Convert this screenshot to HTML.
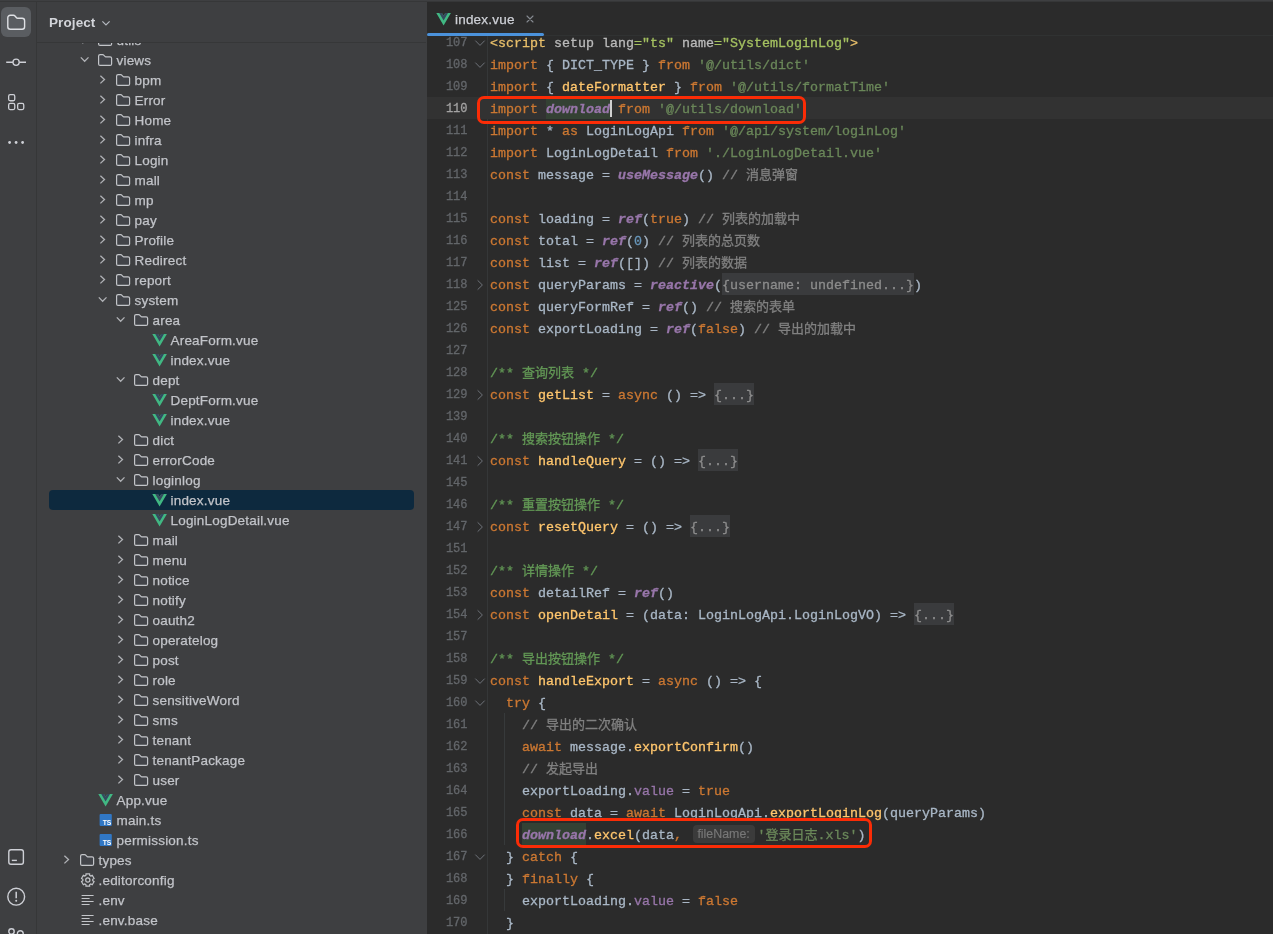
<!DOCTYPE html>
<html lang="zh">
<head>
<meta charset="utf-8">
<title>index.vue</title>
<style>
html,body{margin:0;padding:0}
body{width:1273px;height:934px;overflow:hidden;background:#3e3f41;position:relative;font-family:"Liberation Sans","Noto Sans CJK SC",sans-serif;color:#ced0d6}
#topline{position:absolute;left:0;top:0;width:1273px;height:1px;background:#3e3f41;border-bottom:1px solid #363738;z-index:9}
#strip{position:absolute;left:0;top:0;width:36px;height:934px;background:#3e3f41;border-right:1px solid #363738}
#strip .btn{position:absolute;left:1.400px;top:7px;width:29.600px;height:30px;border-radius:6px;background:#5a5d61}
#strip svg{position:absolute;left:6px;width:20px;height:20px}
#proj{position:absolute;left:37px;top:0;width:389px;height:934px;background:#3e3f41;overflow:hidden}
#proj .hd{position:absolute;left:0;top:0;width:389px;height:42px;background:#3e3f41;border-bottom:1px solid #363738;z-index:3}
#proj .hd b{will-change:transform;position:absolute;left:12px;top:14px;font-size:13.5px;line-height:18px;color:#d3d5da;letter-spacing:.1px}
#proj .hd svg{position:absolute;left:63px;top:17px;width:12px;height:12px}
#tree{will-change:transform;position:absolute;left:-37px;top:0;width:464px;height:934px}
.row{position:absolute;left:0;width:464px;height:20px}
.row span{position:absolute;top:0;height:20px}
.row .t{font-size:13.5px;line-height:21.5px;color:#c2c4c9;white-space:nowrap;-webkit-text-stroke:.25px;letter-spacing:.2px;margin-left:.5px}
.row .a svg{position:absolute;left:0;top:2px;width:16px;height:16px}.row .i svg{position:absolute;left:2px;top:2px;width:16px;height:16px}
.sel{position:absolute;left:49px;width:365px;height:20px;border-radius:4px;background:#0d293e}
#ed{position:absolute;left:427px;top:0;width:846px;height:934px;background:#2b2b2b;overflow:hidden}
#tabs{position:absolute;left:0;top:0;width:846px;height:35px;background:#2b2b2b;border-bottom:1px solid #303232;z-index:5}
#tabs .ti{position:absolute;left:8.700px;top:11.100px;width:16px;height:16px}
#tabs .tt{will-change:transform;position:absolute;left:28px;top:11px;font-size:13.5px;line-height:18.5px;color:#ced0d6;-webkit-text-stroke:.25px;letter-spacing:.2px}
#tabs .tx{position:absolute;left:97px;top:13px;width:12px;height:12px}
#tabs .ul{position:absolute;left:0;top:33px;width:117px;height:3.3px;border-radius:1.6px;background:#4b92db}
#code{will-change:transform;position:absolute;left:0;top:36px;width:846px;height:898px;overflow:hidden;font-family:"Liberation Mono","Noto Sans CJK SC",monospace;font-size:13.333px;color:#a9b7c6;-webkit-text-stroke:.3px}
#gsep{position:absolute;left:60px;top:0;width:1px;height:898px;background:#353738}
.ln{position:absolute;left:0;width:846px;height:22px;line-height:25px;white-space:pre}
.ln.cur{background:#323232}
.ln .no{position:absolute;left:0;top:0;width:40.5px;text-align:right;color:#63666a;font-size:12px}
.ln.cur .no{color:#a4a3a3}
.ln .fa{position:absolute;left:47.3px;top:5.5px;width:12px;height:12px}
.ln .cd{position:absolute;left:63px;top:0;height:22px}
.k{color:#cc7832}.s{color:#6a8759}.c{color:#808080}.d{color:#629755}.f{color:#ffc66d}
.p{color:#9876aa;font-style:italic;font-weight:bold}.pn{color:#9876aa}.n{color:#6897bb}
.tg{color:#e8bf6a}.at{color:#bababa}.av{color:#a5c261}.w{color:#a9b7c6}
.z{font-size:13px}
.fo{background:#3a3b3d;color:#8c8c8c;display:inline-block;height:22px;vertical-align:top}
.hl{background:#344134;display:inline-block;height:22px;vertical-align:top}
.caret{display:inline-block;width:2px;height:17px;background:#d0d0d0;vertical-align:-4px;margin-right:-2px}
.hint{display:inline-block;vertical-align:top;font-family:"Liberation Sans",sans-serif;font-size:12.400px;line-height:18.700px;height:17.700px;width:62px;box-sizing:border-box;text-align:center;background:#3b3b3b;color:#787878;border-radius:4px;margin:2px 3px 0 2.600px;-webkit-text-stroke:.15px}
.guide{position:absolute;left:77px;width:1px;background:#373a3b}
.red{position:absolute;border:3.600px solid #fb2c06;border-radius:7px;box-sizing:border-box;z-index:8}
</style>
</head>
<body>
<div id="topline"></div>
<div id="strip">
<div class="btn"></div>
<svg style="top:12px" viewBox="0 0 20 20"><path d="M1.800 5.800a2.500 2.500 0 0 1 2.500-2.500h3.200c.6 0 1.100.25 1.500.7l1.500 1.800c.3.350.7.500 1.100.500h4.500a2.500 2.500 0 0 1 2.500 2.500v6a2.500 2.500 0 0 1-2.500 2.500H4.300a2.500 2.500 0 0 1-2.500-2.500z" fill="none" stroke="#dfe1e5" stroke-width="1.400"/></svg>
<svg style="top:52px" viewBox="0 0 20 20"><circle cx="10.100" cy="10.250" r="3.100" fill="none" stroke="#ced0d6" stroke-width="1.300"/><path d="M.2 10.250h6.800M13.200 10.250h6.900" stroke="#ced0d6" stroke-width="1.300" fill="none"/></svg>
<svg style="top:92px" viewBox="0 0 20 20"><rect x="2.650" y="2.650" width="6.100" height="6.100" rx="1.500" fill="none" stroke="#ced0d6" stroke-width="1.300"/><rect x="2.650" y="11.450" width="6.100" height="6.100" rx="1.500" fill="none" stroke="#ced0d6" stroke-width="1.300"/><rect x="11.650" y="11.450" width="6.100" height="6.100" rx="1.500" fill="none" stroke="#ced0d6" stroke-width="1.300"/></svg>
<svg style="top:132px" viewBox="0 0 20 20"><circle cx="3.600" cy="10.500" r="1.400" fill="#ced0d6"/><circle cx="10.100" cy="10.500" r="1.400" fill="#ced0d6"/><circle cx="16.600" cy="10.500" r="1.400" fill="#ced0d6"/></svg>
<svg style="top:847px" viewBox="0 0 20 20"><rect x="2.800" y="2.700" width="14.600" height="14.600" rx="2.200" fill="none" stroke="#ced0d6" stroke-width="1.400"/><path d="M5.800 13.400h5.100" stroke="#ced0d6" stroke-width="1.400"/></svg>
<svg style="top:887px" viewBox="0 0 20 20" overflow="visible"><circle cx="10.200" cy="9.700" r="8.400" fill="none" stroke="#ced0d6" stroke-width="1.400"/><path d="M10.200 4.750v6.450" stroke="#ced0d6" stroke-width="1.500"/><circle cx="10.200" cy="13.800" r="1" fill="#ced0d6"/></svg>
<svg style="top:925px" viewBox="0 0 20 20"><circle cx="5.500" cy="6.500" r="2.700" fill="none" stroke="#ced0d6" stroke-width="1.400"/><circle cx="14.300" cy="8.600" r="2.900" fill="none" stroke="#ced0d6" stroke-width="1.400"/></svg>
</div>
<div id="proj">
<div id="tree">
<div class="row" style="top:30px"><span style="left:76px" class="a"><svg class="ar" viewBox="0 0 16 16"><path d="M6.400 3.700 10.500 7.550 6.400 11.400" fill="none" stroke="#b0b2b6" stroke-width="1.300"/></svg></span><span style="left:94.7px" class="i"><svg class="ic" viewBox="0 0 16 16"><path d="M1.600 4.100c0-.83.670-1.500 1.500-1.500h2.500c.4 0 .78.160 1.060.44l1.300 1.420c.19.200.45.320.73.320h4.410c.83 0 1.500.670 1.500 1.500v5.620c0 .83-.67 1.500-1.500 1.500H3.100c-.83 0-1.500-.67-1.500-1.500z" fill="#424449" stroke="#c3c5c9" stroke-width="1.200"/></svg></span><span class="t" style="left:116px">utils</span></div>
<div class="row" style="top:50px"><span style="left:76px" class="a"><svg class="ar" viewBox="0 0 16 16"><path d="M4.800 5.400 8.650 9.250 12.500 5.400" fill="none" stroke="#b0b2b6" stroke-width="1.300"/></svg></span><span style="left:94.7px" class="i"><svg class="ic" viewBox="0 0 16 16"><path d="M1.600 4.100c0-.83.670-1.500 1.500-1.500h2.500c.4 0 .78.160 1.060.44l1.300 1.420c.19.200.45.320.73.320h4.410c.83 0 1.500.670 1.500 1.500v5.620c0 .83-.67 1.500-1.500 1.500H3.100c-.83 0-1.500-.67-1.500-1.500z" fill="#424449" stroke="#c3c5c9" stroke-width="1.200"/></svg></span><span class="t" style="left:116px">views</span></div>
<div class="row" style="top:70px"><span style="left:94px" class="a"><svg class="ar" viewBox="0 0 16 16"><path d="M6.400 3.700 10.500 7.550 6.400 11.400" fill="none" stroke="#b0b2b6" stroke-width="1.300"/></svg></span><span style="left:112.7px" class="i"><svg class="ic" viewBox="0 0 16 16"><path d="M1.600 4.100c0-.83.670-1.500 1.500-1.500h2.500c.4 0 .78.160 1.060.44l1.300 1.420c.19.200.45.320.73.320h4.410c.83 0 1.500.670 1.500 1.500v5.620c0 .83-.67 1.500-1.500 1.500H3.100c-.83 0-1.500-.67-1.500-1.500z" fill="#424449" stroke="#c3c5c9" stroke-width="1.200"/></svg></span><span class="t" style="left:134px">bpm</span></div>
<div class="row" style="top:90px"><span style="left:94px" class="a"><svg class="ar" viewBox="0 0 16 16"><path d="M6.400 3.700 10.500 7.550 6.400 11.400" fill="none" stroke="#b0b2b6" stroke-width="1.300"/></svg></span><span style="left:112.7px" class="i"><svg class="ic" viewBox="0 0 16 16"><path d="M1.600 4.100c0-.83.670-1.500 1.500-1.500h2.500c.4 0 .78.160 1.060.44l1.300 1.420c.19.200.45.320.73.320h4.410c.83 0 1.500.670 1.500 1.500v5.620c0 .83-.67 1.500-1.500 1.500H3.100c-.83 0-1.500-.67-1.500-1.500z" fill="#424449" stroke="#c3c5c9" stroke-width="1.200"/></svg></span><span class="t" style="left:134px">Error</span></div>
<div class="row" style="top:110px"><span style="left:94px" class="a"><svg class="ar" viewBox="0 0 16 16"><path d="M6.400 3.700 10.500 7.550 6.400 11.400" fill="none" stroke="#b0b2b6" stroke-width="1.300"/></svg></span><span style="left:112.7px" class="i"><svg class="ic" viewBox="0 0 16 16"><path d="M1.600 4.100c0-.83.670-1.500 1.500-1.500h2.500c.4 0 .78.160 1.060.44l1.300 1.420c.19.200.45.320.73.320h4.410c.83 0 1.500.670 1.500 1.500v5.620c0 .83-.67 1.500-1.500 1.500H3.100c-.83 0-1.500-.67-1.500-1.500z" fill="#424449" stroke="#c3c5c9" stroke-width="1.200"/></svg></span><span class="t" style="left:134px">Home</span></div>
<div class="row" style="top:130px"><span style="left:94px" class="a"><svg class="ar" viewBox="0 0 16 16"><path d="M6.400 3.700 10.500 7.550 6.400 11.400" fill="none" stroke="#b0b2b6" stroke-width="1.300"/></svg></span><span style="left:112.7px" class="i"><svg class="ic" viewBox="0 0 16 16"><path d="M1.600 4.100c0-.83.670-1.500 1.500-1.500h2.500c.4 0 .78.160 1.060.44l1.300 1.420c.19.200.45.320.73.320h4.410c.83 0 1.500.670 1.500 1.500v5.620c0 .83-.67 1.500-1.500 1.500H3.100c-.83 0-1.500-.67-1.500-1.500z" fill="#424449" stroke="#c3c5c9" stroke-width="1.200"/></svg></span><span class="t" style="left:134px">infra</span></div>
<div class="row" style="top:150px"><span style="left:94px" class="a"><svg class="ar" viewBox="0 0 16 16"><path d="M6.400 3.700 10.500 7.550 6.400 11.400" fill="none" stroke="#b0b2b6" stroke-width="1.300"/></svg></span><span style="left:112.7px" class="i"><svg class="ic" viewBox="0 0 16 16"><path d="M1.600 4.100c0-.83.670-1.500 1.500-1.500h2.500c.4 0 .78.160 1.060.44l1.300 1.420c.19.200.45.320.73.320h4.410c.83 0 1.500.670 1.500 1.500v5.620c0 .83-.67 1.500-1.500 1.500H3.100c-.83 0-1.500-.67-1.500-1.500z" fill="#424449" stroke="#c3c5c9" stroke-width="1.200"/></svg></span><span class="t" style="left:134px">Login</span></div>
<div class="row" style="top:170px"><span style="left:94px" class="a"><svg class="ar" viewBox="0 0 16 16"><path d="M6.400 3.700 10.500 7.550 6.400 11.400" fill="none" stroke="#b0b2b6" stroke-width="1.300"/></svg></span><span style="left:112.7px" class="i"><svg class="ic" viewBox="0 0 16 16"><path d="M1.600 4.100c0-.83.670-1.500 1.500-1.500h2.500c.4 0 .78.160 1.060.44l1.300 1.420c.19.200.45.320.73.320h4.410c.83 0 1.500.670 1.500 1.500v5.620c0 .83-.67 1.500-1.500 1.500H3.100c-.83 0-1.500-.67-1.500-1.500z" fill="#424449" stroke="#c3c5c9" stroke-width="1.200"/></svg></span><span class="t" style="left:134px">mall</span></div>
<div class="row" style="top:190px"><span style="left:94px" class="a"><svg class="ar" viewBox="0 0 16 16"><path d="M6.400 3.700 10.500 7.550 6.400 11.400" fill="none" stroke="#b0b2b6" stroke-width="1.300"/></svg></span><span style="left:112.7px" class="i"><svg class="ic" viewBox="0 0 16 16"><path d="M1.600 4.100c0-.83.670-1.500 1.500-1.500h2.500c.4 0 .78.160 1.060.44l1.300 1.420c.19.200.45.320.73.320h4.410c.83 0 1.500.670 1.500 1.500v5.620c0 .83-.67 1.500-1.500 1.500H3.100c-.83 0-1.500-.67-1.500-1.500z" fill="#424449" stroke="#c3c5c9" stroke-width="1.200"/></svg></span><span class="t" style="left:134px">mp</span></div>
<div class="row" style="top:210px"><span style="left:94px" class="a"><svg class="ar" viewBox="0 0 16 16"><path d="M6.400 3.700 10.500 7.550 6.400 11.400" fill="none" stroke="#b0b2b6" stroke-width="1.300"/></svg></span><span style="left:112.7px" class="i"><svg class="ic" viewBox="0 0 16 16"><path d="M1.600 4.100c0-.83.670-1.500 1.500-1.500h2.500c.4 0 .78.160 1.060.44l1.300 1.420c.19.200.45.320.73.320h4.410c.83 0 1.500.670 1.500 1.500v5.620c0 .83-.67 1.500-1.500 1.500H3.100c-.83 0-1.500-.67-1.500-1.500z" fill="#424449" stroke="#c3c5c9" stroke-width="1.200"/></svg></span><span class="t" style="left:134px">pay</span></div>
<div class="row" style="top:230px"><span style="left:94px" class="a"><svg class="ar" viewBox="0 0 16 16"><path d="M6.400 3.700 10.500 7.550 6.400 11.400" fill="none" stroke="#b0b2b6" stroke-width="1.300"/></svg></span><span style="left:112.7px" class="i"><svg class="ic" viewBox="0 0 16 16"><path d="M1.600 4.100c0-.83.670-1.500 1.500-1.500h2.500c.4 0 .78.160 1.060.44l1.300 1.420c.19.200.45.320.73.320h4.410c.83 0 1.500.670 1.500 1.500v5.620c0 .83-.67 1.500-1.500 1.500H3.100c-.83 0-1.500-.67-1.500-1.500z" fill="#424449" stroke="#c3c5c9" stroke-width="1.200"/></svg></span><span class="t" style="left:134px">Profile</span></div>
<div class="row" style="top:250px"><span style="left:94px" class="a"><svg class="ar" viewBox="0 0 16 16"><path d="M6.400 3.700 10.500 7.550 6.400 11.400" fill="none" stroke="#b0b2b6" stroke-width="1.300"/></svg></span><span style="left:112.7px" class="i"><svg class="ic" viewBox="0 0 16 16"><path d="M1.600 4.100c0-.83.670-1.500 1.500-1.500h2.500c.4 0 .78.160 1.060.44l1.300 1.420c.19.200.45.320.73.320h4.410c.83 0 1.500.670 1.500 1.500v5.620c0 .83-.67 1.500-1.500 1.500H3.100c-.83 0-1.500-.67-1.500-1.500z" fill="#424449" stroke="#c3c5c9" stroke-width="1.200"/></svg></span><span class="t" style="left:134px">Redirect</span></div>
<div class="row" style="top:270px"><span style="left:94px" class="a"><svg class="ar" viewBox="0 0 16 16"><path d="M6.400 3.700 10.500 7.550 6.400 11.400" fill="none" stroke="#b0b2b6" stroke-width="1.300"/></svg></span><span style="left:112.7px" class="i"><svg class="ic" viewBox="0 0 16 16"><path d="M1.600 4.100c0-.83.670-1.500 1.500-1.500h2.500c.4 0 .78.160 1.060.44l1.300 1.420c.19.200.45.320.73.320h4.410c.83 0 1.500.670 1.500 1.500v5.620c0 .83-.67 1.500-1.500 1.500H3.100c-.83 0-1.500-.67-1.500-1.500z" fill="#424449" stroke="#c3c5c9" stroke-width="1.200"/></svg></span><span class="t" style="left:134px">report</span></div>
<div class="row" style="top:290px"><span style="left:94px" class="a"><svg class="ar" viewBox="0 0 16 16"><path d="M4.800 5.400 8.650 9.250 12.500 5.400" fill="none" stroke="#b0b2b6" stroke-width="1.300"/></svg></span><span style="left:112.7px" class="i"><svg class="ic" viewBox="0 0 16 16"><path d="M1.600 4.100c0-.83.670-1.500 1.500-1.500h2.500c.4 0 .78.160 1.060.44l1.300 1.420c.19.200.45.320.73.320h4.410c.83 0 1.500.670 1.500 1.500v5.620c0 .83-.67 1.500-1.500 1.500H3.100c-.83 0-1.500-.67-1.500-1.500z" fill="#424449" stroke="#c3c5c9" stroke-width="1.200"/></svg></span><span class="t" style="left:134px">system</span></div>
<div class="row" style="top:310px"><span style="left:112px" class="a"><svg class="ar" viewBox="0 0 16 16"><path d="M4.800 5.400 8.650 9.250 12.500 5.400" fill="none" stroke="#b0b2b6" stroke-width="1.300"/></svg></span><span style="left:130.7px" class="i"><svg class="ic" viewBox="0 0 16 16"><path d="M1.600 4.100c0-.83.670-1.500 1.500-1.500h2.500c.4 0 .78.160 1.060.44l1.300 1.420c.19.200.45.320.73.320h4.410c.83 0 1.500.670 1.500 1.500v5.620c0 .83-.67 1.500-1.500 1.500H3.100c-.83 0-1.500-.67-1.500-1.500z" fill="#424449" stroke="#c3c5c9" stroke-width="1.200"/></svg></span><span class="t" style="left:152px">area</span></div>
<div class="row" style="top:330px"><span style="left:149.5px" class="i"><svg class="ic" viewBox="0 0 16 16"><path d="M9.290 1.900 7.600 4.820 5.910 1.900H.3L7.600 14.540 14.900 1.900z" fill="#41b883"/><path d="M9.290 1.900 7.600 4.820 5.910 1.900H3.220L7.600 9.490 11.980 1.900z" fill="#35495e"/></svg></span><span class="t" style="left:170px">AreaForm.vue</span></div>
<div class="row" style="top:350px"><span style="left:149.5px" class="i"><svg class="ic" viewBox="0 0 16 16"><path d="M9.290 1.900 7.600 4.820 5.910 1.900H.3L7.600 14.540 14.900 1.900z" fill="#41b883"/><path d="M9.290 1.900 7.600 4.820 5.910 1.900H3.220L7.600 9.490 11.980 1.900z" fill="#35495e"/></svg></span><span class="t" style="left:170px">index.vue</span></div>
<div class="row" style="top:370px"><span style="left:112px" class="a"><svg class="ar" viewBox="0 0 16 16"><path d="M4.800 5.400 8.650 9.250 12.500 5.400" fill="none" stroke="#b0b2b6" stroke-width="1.300"/></svg></span><span style="left:130.7px" class="i"><svg class="ic" viewBox="0 0 16 16"><path d="M1.600 4.100c0-.83.670-1.500 1.500-1.500h2.500c.4 0 .78.160 1.060.44l1.300 1.420c.19.200.45.320.73.320h4.410c.83 0 1.500.670 1.500 1.500v5.620c0 .83-.67 1.500-1.500 1.500H3.100c-.83 0-1.500-.67-1.500-1.500z" fill="#424449" stroke="#c3c5c9" stroke-width="1.200"/></svg></span><span class="t" style="left:152px">dept</span></div>
<div class="row" style="top:390px"><span style="left:149.5px" class="i"><svg class="ic" viewBox="0 0 16 16"><path d="M9.290 1.900 7.600 4.820 5.910 1.900H.3L7.600 14.540 14.900 1.900z" fill="#41b883"/><path d="M9.290 1.900 7.600 4.820 5.910 1.900H3.220L7.600 9.490 11.980 1.900z" fill="#35495e"/></svg></span><span class="t" style="left:170px">DeptForm.vue</span></div>
<div class="row" style="top:410px"><span style="left:149.5px" class="i"><svg class="ic" viewBox="0 0 16 16"><path d="M9.290 1.900 7.600 4.820 5.910 1.900H.3L7.600 14.540 14.900 1.900z" fill="#41b883"/><path d="M9.290 1.900 7.600 4.820 5.910 1.900H3.220L7.600 9.490 11.980 1.900z" fill="#35495e"/></svg></span><span class="t" style="left:170px">index.vue</span></div>
<div class="row" style="top:430px"><span style="left:112px" class="a"><svg class="ar" viewBox="0 0 16 16"><path d="M6.400 3.700 10.500 7.550 6.400 11.400" fill="none" stroke="#b0b2b6" stroke-width="1.300"/></svg></span><span style="left:130.7px" class="i"><svg class="ic" viewBox="0 0 16 16"><path d="M1.600 4.100c0-.83.670-1.500 1.500-1.500h2.500c.4 0 .78.160 1.060.44l1.300 1.420c.19.200.45.320.73.320h4.410c.83 0 1.500.670 1.500 1.500v5.620c0 .83-.67 1.500-1.500 1.500H3.100c-.83 0-1.500-.67-1.500-1.500z" fill="#424449" stroke="#c3c5c9" stroke-width="1.200"/></svg></span><span class="t" style="left:152px">dict</span></div>
<div class="row" style="top:450px"><span style="left:112px" class="a"><svg class="ar" viewBox="0 0 16 16"><path d="M6.400 3.700 10.500 7.550 6.400 11.400" fill="none" stroke="#b0b2b6" stroke-width="1.300"/></svg></span><span style="left:130.7px" class="i"><svg class="ic" viewBox="0 0 16 16"><path d="M1.600 4.100c0-.83.670-1.500 1.500-1.500h2.500c.4 0 .78.160 1.060.44l1.300 1.420c.19.200.45.320.73.320h4.410c.83 0 1.500.670 1.500 1.500v5.620c0 .83-.67 1.500-1.500 1.500H3.100c-.83 0-1.500-.67-1.500-1.500z" fill="#424449" stroke="#c3c5c9" stroke-width="1.200"/></svg></span><span class="t" style="left:152px">errorCode</span></div>
<div class="row" style="top:470px"><span style="left:112px" class="a"><svg class="ar" viewBox="0 0 16 16"><path d="M4.800 5.400 8.650 9.250 12.500 5.400" fill="none" stroke="#b0b2b6" stroke-width="1.300"/></svg></span><span style="left:130.7px" class="i"><svg class="ic" viewBox="0 0 16 16"><path d="M1.600 4.100c0-.83.670-1.500 1.500-1.500h2.500c.4 0 .78.160 1.060.44l1.300 1.420c.19.200.45.320.73.320h4.410c.83 0 1.500.670 1.500 1.500v5.620c0 .83-.67 1.500-1.500 1.500H3.100c-.83 0-1.500-.67-1.500-1.500z" fill="#424449" stroke="#c3c5c9" stroke-width="1.200"/></svg></span><span class="t" style="left:152px">loginlog</span></div>
<div class="sel" style="top:490px"></div><div class="row" style="top:490px"><span style="left:149.5px" class="i"><svg class="ic" viewBox="0 0 16 16"><path d="M9.290 1.900 7.600 4.820 5.910 1.900H.3L7.600 14.540 14.900 1.900z" fill="#41b883"/><path d="M9.290 1.900 7.600 4.820 5.910 1.900H3.220L7.600 9.490 11.980 1.900z" fill="#35495e"/></svg></span><span class="t" style="left:170px">index.vue</span></div>
<div class="row" style="top:510px"><span style="left:149.5px" class="i"><svg class="ic" viewBox="0 0 16 16"><path d="M9.290 1.900 7.600 4.820 5.910 1.900H.3L7.600 14.540 14.900 1.900z" fill="#41b883"/><path d="M9.290 1.900 7.600 4.820 5.910 1.900H3.220L7.600 9.490 11.980 1.900z" fill="#35495e"/></svg></span><span class="t" style="left:170px">LoginLogDetail.vue</span></div>
<div class="row" style="top:530px"><span style="left:112px" class="a"><svg class="ar" viewBox="0 0 16 16"><path d="M6.400 3.700 10.500 7.550 6.400 11.400" fill="none" stroke="#b0b2b6" stroke-width="1.300"/></svg></span><span style="left:130.7px" class="i"><svg class="ic" viewBox="0 0 16 16"><path d="M1.600 4.100c0-.83.670-1.500 1.500-1.500h2.500c.4 0 .78.160 1.060.44l1.300 1.420c.19.200.45.320.73.320h4.410c.83 0 1.500.670 1.500 1.500v5.620c0 .83-.67 1.500-1.500 1.500H3.100c-.83 0-1.500-.67-1.500-1.500z" fill="#424449" stroke="#c3c5c9" stroke-width="1.200"/></svg></span><span class="t" style="left:152px">mail</span></div>
<div class="row" style="top:550px"><span style="left:112px" class="a"><svg class="ar" viewBox="0 0 16 16"><path d="M6.400 3.700 10.500 7.550 6.400 11.400" fill="none" stroke="#b0b2b6" stroke-width="1.300"/></svg></span><span style="left:130.7px" class="i"><svg class="ic" viewBox="0 0 16 16"><path d="M1.600 4.100c0-.83.670-1.500 1.500-1.500h2.500c.4 0 .78.160 1.060.44l1.300 1.420c.19.200.45.320.73.320h4.410c.83 0 1.500.670 1.500 1.500v5.620c0 .83-.67 1.500-1.500 1.500H3.100c-.83 0-1.500-.67-1.500-1.500z" fill="#424449" stroke="#c3c5c9" stroke-width="1.200"/></svg></span><span class="t" style="left:152px">menu</span></div>
<div class="row" style="top:570px"><span style="left:112px" class="a"><svg class="ar" viewBox="0 0 16 16"><path d="M6.400 3.700 10.500 7.550 6.400 11.400" fill="none" stroke="#b0b2b6" stroke-width="1.300"/></svg></span><span style="left:130.7px" class="i"><svg class="ic" viewBox="0 0 16 16"><path d="M1.600 4.100c0-.83.670-1.500 1.500-1.500h2.500c.4 0 .78.160 1.060.44l1.300 1.420c.19.200.45.320.73.320h4.410c.83 0 1.500.670 1.500 1.500v5.620c0 .83-.67 1.500-1.500 1.500H3.100c-.83 0-1.500-.67-1.500-1.500z" fill="#424449" stroke="#c3c5c9" stroke-width="1.200"/></svg></span><span class="t" style="left:152px">notice</span></div>
<div class="row" style="top:590px"><span style="left:112px" class="a"><svg class="ar" viewBox="0 0 16 16"><path d="M6.400 3.700 10.500 7.550 6.400 11.400" fill="none" stroke="#b0b2b6" stroke-width="1.300"/></svg></span><span style="left:130.7px" class="i"><svg class="ic" viewBox="0 0 16 16"><path d="M1.600 4.100c0-.83.670-1.500 1.500-1.500h2.500c.4 0 .78.160 1.060.44l1.300 1.420c.19.200.45.320.73.320h4.410c.83 0 1.500.670 1.500 1.500v5.620c0 .83-.67 1.500-1.500 1.500H3.100c-.83 0-1.500-.67-1.500-1.500z" fill="#424449" stroke="#c3c5c9" stroke-width="1.200"/></svg></span><span class="t" style="left:152px">notify</span></div>
<div class="row" style="top:610px"><span style="left:112px" class="a"><svg class="ar" viewBox="0 0 16 16"><path d="M6.400 3.700 10.500 7.550 6.400 11.400" fill="none" stroke="#b0b2b6" stroke-width="1.300"/></svg></span><span style="left:130.7px" class="i"><svg class="ic" viewBox="0 0 16 16"><path d="M1.600 4.100c0-.83.670-1.500 1.500-1.500h2.500c.4 0 .78.160 1.060.44l1.300 1.420c.19.200.45.320.73.320h4.410c.83 0 1.500.670 1.500 1.500v5.620c0 .83-.67 1.500-1.500 1.500H3.100c-.83 0-1.500-.67-1.500-1.500z" fill="#424449" stroke="#c3c5c9" stroke-width="1.200"/></svg></span><span class="t" style="left:152px">oauth2</span></div>
<div class="row" style="top:630px"><span style="left:112px" class="a"><svg class="ar" viewBox="0 0 16 16"><path d="M6.400 3.700 10.500 7.550 6.400 11.400" fill="none" stroke="#b0b2b6" stroke-width="1.300"/></svg></span><span style="left:130.7px" class="i"><svg class="ic" viewBox="0 0 16 16"><path d="M1.600 4.100c0-.83.670-1.500 1.500-1.500h2.500c.4 0 .78.160 1.060.44l1.300 1.420c.19.200.45.320.73.320h4.410c.83 0 1.500.670 1.500 1.500v5.620c0 .83-.67 1.500-1.500 1.500H3.100c-.83 0-1.500-.67-1.500-1.500z" fill="#424449" stroke="#c3c5c9" stroke-width="1.200"/></svg></span><span class="t" style="left:152px">operatelog</span></div>
<div class="row" style="top:650px"><span style="left:112px" class="a"><svg class="ar" viewBox="0 0 16 16"><path d="M6.400 3.700 10.500 7.550 6.400 11.400" fill="none" stroke="#b0b2b6" stroke-width="1.300"/></svg></span><span style="left:130.7px" class="i"><svg class="ic" viewBox="0 0 16 16"><path d="M1.600 4.100c0-.83.670-1.500 1.500-1.500h2.500c.4 0 .78.160 1.060.44l1.300 1.420c.19.200.45.320.73.320h4.410c.83 0 1.500.670 1.500 1.500v5.620c0 .83-.67 1.500-1.500 1.500H3.100c-.83 0-1.500-.67-1.500-1.500z" fill="#424449" stroke="#c3c5c9" stroke-width="1.200"/></svg></span><span class="t" style="left:152px">post</span></div>
<div class="row" style="top:670px"><span style="left:112px" class="a"><svg class="ar" viewBox="0 0 16 16"><path d="M6.400 3.700 10.500 7.550 6.400 11.400" fill="none" stroke="#b0b2b6" stroke-width="1.300"/></svg></span><span style="left:130.7px" class="i"><svg class="ic" viewBox="0 0 16 16"><path d="M1.600 4.100c0-.83.670-1.500 1.500-1.500h2.500c.4 0 .78.160 1.060.44l1.300 1.420c.19.200.45.320.73.320h4.410c.83 0 1.500.670 1.500 1.500v5.620c0 .83-.67 1.500-1.500 1.500H3.100c-.83 0-1.500-.67-1.500-1.500z" fill="#424449" stroke="#c3c5c9" stroke-width="1.200"/></svg></span><span class="t" style="left:152px">role</span></div>
<div class="row" style="top:690px"><span style="left:112px" class="a"><svg class="ar" viewBox="0 0 16 16"><path d="M6.400 3.700 10.500 7.550 6.400 11.400" fill="none" stroke="#b0b2b6" stroke-width="1.300"/></svg></span><span style="left:130.7px" class="i"><svg class="ic" viewBox="0 0 16 16"><path d="M1.600 4.100c0-.83.670-1.500 1.500-1.500h2.500c.4 0 .78.160 1.060.44l1.300 1.420c.19.200.45.320.73.320h4.410c.83 0 1.500.670 1.500 1.500v5.620c0 .83-.67 1.500-1.500 1.500H3.100c-.83 0-1.500-.67-1.500-1.500z" fill="#424449" stroke="#c3c5c9" stroke-width="1.200"/></svg></span><span class="t" style="left:152px">sensitiveWord</span></div>
<div class="row" style="top:710px"><span style="left:112px" class="a"><svg class="ar" viewBox="0 0 16 16"><path d="M6.400 3.700 10.500 7.550 6.400 11.400" fill="none" stroke="#b0b2b6" stroke-width="1.300"/></svg></span><span style="left:130.7px" class="i"><svg class="ic" viewBox="0 0 16 16"><path d="M1.600 4.100c0-.83.670-1.500 1.500-1.500h2.500c.4 0 .78.160 1.060.44l1.300 1.420c.19.200.45.320.73.320h4.410c.83 0 1.500.670 1.500 1.500v5.620c0 .83-.67 1.500-1.500 1.500H3.100c-.83 0-1.500-.67-1.500-1.500z" fill="#424449" stroke="#c3c5c9" stroke-width="1.200"/></svg></span><span class="t" style="left:152px">sms</span></div>
<div class="row" style="top:730px"><span style="left:112px" class="a"><svg class="ar" viewBox="0 0 16 16"><path d="M6.400 3.700 10.500 7.550 6.400 11.400" fill="none" stroke="#b0b2b6" stroke-width="1.300"/></svg></span><span style="left:130.7px" class="i"><svg class="ic" viewBox="0 0 16 16"><path d="M1.600 4.100c0-.83.670-1.500 1.500-1.500h2.500c.4 0 .78.160 1.060.44l1.300 1.420c.19.200.45.320.73.320h4.410c.83 0 1.500.670 1.500 1.500v5.620c0 .83-.67 1.500-1.500 1.500H3.100c-.83 0-1.500-.67-1.500-1.500z" fill="#424449" stroke="#c3c5c9" stroke-width="1.200"/></svg></span><span class="t" style="left:152px">tenant</span></div>
<div class="row" style="top:750px"><span style="left:112px" class="a"><svg class="ar" viewBox="0 0 16 16"><path d="M6.400 3.700 10.500 7.550 6.400 11.400" fill="none" stroke="#b0b2b6" stroke-width="1.300"/></svg></span><span style="left:130.7px" class="i"><svg class="ic" viewBox="0 0 16 16"><path d="M1.600 4.100c0-.83.670-1.500 1.500-1.500h2.500c.4 0 .78.160 1.060.44l1.300 1.420c.19.200.45.320.73.320h4.410c.83 0 1.500.670 1.500 1.500v5.620c0 .83-.67 1.500-1.500 1.500H3.100c-.83 0-1.500-.67-1.500-1.500z" fill="#424449" stroke="#c3c5c9" stroke-width="1.200"/></svg></span><span class="t" style="left:152px">tenantPackage</span></div>
<div class="row" style="top:770px"><span style="left:112px" class="a"><svg class="ar" viewBox="0 0 16 16"><path d="M6.400 3.700 10.500 7.550 6.400 11.400" fill="none" stroke="#b0b2b6" stroke-width="1.300"/></svg></span><span style="left:130.7px" class="i"><svg class="ic" viewBox="0 0 16 16"><path d="M1.600 4.100c0-.83.670-1.500 1.500-1.500h2.500c.4 0 .78.160 1.060.44l1.300 1.420c.19.200.45.320.73.320h4.410c.83 0 1.500.670 1.500 1.500v5.620c0 .83-.67 1.500-1.500 1.500H3.100c-.83 0-1.500-.67-1.500-1.500z" fill="#424449" stroke="#c3c5c9" stroke-width="1.200"/></svg></span><span class="t" style="left:152px">user</span></div>
<div class="row" style="top:790px"><span style="left:95.5px" class="i"><svg class="ic" viewBox="0 0 16 16"><path d="M9.290 1.900 7.600 4.820 5.910 1.900H.3L7.600 14.540 14.900 1.900z" fill="#41b883"/><path d="M9.290 1.900 7.600 4.820 5.910 1.900H3.220L7.600 9.490 11.980 1.900z" fill="#35495e"/></svg></span><span class="t" style="left:116px">App.vue</span></div>
<div class="row" style="top:810px"><span style="left:95.5px" class="i"><svg class="ic" viewBox="0 0 16 16"><rect x="1.600" y="1.900" width="12.200" height="12.100" rx="1" fill="#3178c6"/><text x="9" y="13.100" font-family="Liberation Sans, sans-serif" font-size="6.800" font-weight="bold" fill="#fff" text-anchor="middle">TS</text></svg></span><span class="t" style="left:116px">main.ts</span></div>
<div class="row" style="top:830px"><span style="left:95.5px" class="i"><svg class="ic" viewBox="0 0 16 16"><rect x="1.600" y="1.900" width="12.200" height="12.100" rx="1" fill="#3178c6"/><text x="9" y="13.100" font-family="Liberation Sans, sans-serif" font-size="6.800" font-weight="bold" fill="#fff" text-anchor="middle">TS</text></svg></span><span class="t" style="left:116px">permission.ts</span></div>
<div class="row" style="top:850px"><span style="left:58px" class="a"><svg class="ar" viewBox="0 0 16 16"><path d="M6.400 3.700 10.500 7.550 6.400 11.400" fill="none" stroke="#b0b2b6" stroke-width="1.300"/></svg></span><span style="left:76.7px" class="i"><svg class="ic" viewBox="0 0 16 16"><path d="M1.600 4.100c0-.83.670-1.500 1.500-1.500h2.500c.4 0 .78.160 1.060.44l1.300 1.420c.19.200.45.320.73.320h4.410c.83 0 1.500.670 1.500 1.500v5.620c0 .83-.67 1.500-1.500 1.500H3.100c-.83 0-1.500-.67-1.500-1.500z" fill="#424449" stroke="#c3c5c9" stroke-width="1.200"/></svg></span><span class="t" style="left:98px">types</span></div>
<div class="row" style="top:870px"><span style="left:77.5px" class="i"><svg class="ic" viewBox="0 0 16 16"><circle cx="7.800" cy="8" r="2.100" fill="none" stroke="#c3c5c9" stroke-width="1.200"/><path d="M5.900 1.780 L9.700 1.780 L9.590 3.330 L10.950 4.110 L12.230 3.250 L14.130 6.540 L12.740 7.220 L12.740 8.780 L14.130 9.460 L12.230 12.750 L10.950 11.890 L9.590 12.670 L9.700 14.220 L5.900 14.220 L6.010 12.670 L4.650 11.890 L3.370 12.750 L1.470 9.460 L2.860 8.780 L2.860 7.220 L1.470 6.540 L3.370 3.250 L4.650 4.110 L6.010 3.330Z" fill="none" stroke="#c3c5c9" stroke-width="1.200" stroke-linejoin="round"/></svg></span><span class="t" style="left:98px">.editorconfig</span></div>
<div class="row" style="top:890px"><span style="left:77.5px" class="i"><svg class="ic" viewBox="0 0 16 16"><path d="M1.600 3.500h12M1.600 6.500h8M1.600 9.500h12M1.600 12.500h8" stroke="#c3c5c9" stroke-width="1.100" fill="none"/></svg></span><span class="t" style="left:98px">.env</span></div>
<div class="row" style="top:910px"><span style="left:77.5px" class="i"><svg class="ic" viewBox="0 0 16 16"><path d="M1.600 3.500h12M1.600 6.500h8M1.600 9.500h12M1.600 12.500h8" stroke="#c3c5c9" stroke-width="1.100" fill="none"/></svg></span><span class="t" style="left:98px">.env.base</span></div>
</div>
<div class="hd"><b>Project</b><svg viewBox="0 0 12 12"><path d="M2.400 4.300 6 7.900 9.600 4.300" fill="none" stroke="#b4b8bf" stroke-width="1.200"/></svg></div>
</div>
<div id="ed">
<div id="code">
<div id="gsep"></div>
<div class="ln" style="top:-5px"><span class="no">107</span><svg class="fa" viewBox="0 0 12 12"><path d="M1.600 3.900 6 8.400 10.400 3.900" fill="none" stroke="#6f737a" stroke-width="1" stroke-linecap="round" stroke-linejoin="round"/></svg><span class="cd"><span class="tg">&lt;script</span><span class="at"> setup lang</span><span class="av">=&quot;ts&quot;</span><span class="at"> name</span><span class="av">=&quot;SystemLoginLog&quot;</span><span class="tg">&gt;</span></span></div>
<div class="ln" style="top:17px"><span class="no">108</span><svg class="fa" viewBox="0 0 12 12"><path d="M1.600 3.900 6 8.400 10.400 3.900" fill="none" stroke="#6f737a" stroke-width="1" stroke-linecap="round" stroke-linejoin="round"/></svg><span class="cd"><span class="k">import</span> { <span class="w">DICT_TYPE</span> } <span class="k">from</span> <span class="s">&#x27;@/utils/dict&#x27;</span></span></div>
<div class="ln" style="top:39px"><span class="no">109</span><span class="cd"><span class="k">import</span> { <span class="f">dateFormatter</span> } <span class="k">from</span> <span class="s">&#x27;@/utils/formatTime&#x27;</span></span></div>
<div class="ln cur" style="top:61px"><span class="no">110</span><span class="cd"><span class="k">import</span> <span class="p hl">download</span><span class="caret"></span> <span class="k">from</span> <span class="s">&#x27;@/utils/download&#x27;</span></span></div>
<div class="ln" style="top:83px"><span class="no">111</span><span class="cd"><span class="k">import</span> * <span class="k">as</span> LoginLogApi <span class="k">from</span> <span class="s">&#x27;@/api/system/loginLog&#x27;</span></span></div>
<div class="ln" style="top:105px"><span class="no">112</span><span class="cd"><span class="k">import</span> LoginLogDetail <span class="k">from</span> <span class="s">&#x27;./LoginLogDetail.vue&#x27;</span></span></div>
<div class="ln" style="top:127px"><span class="no">113</span><span class="cd"><span class="k">const</span> message = <span class="p">useMessage</span>() <span class="c">// <span class="z">消息弹窗</span></span></span></div>
<div class="ln" style="top:149px"><span class="no">114</span><span class="cd"></span></div>
<div class="ln" style="top:171px"><span class="no">115</span><span class="cd"><span class="k">const</span> loading = <span class="p">ref</span>(<span class="k">true</span>) <span class="c">// <span class="z">列表的加载中</span></span></span></div>
<div class="ln" style="top:193px"><span class="no">116</span><span class="cd"><span class="k">const</span> total = <span class="p">ref</span>(<span class="n">0</span>) <span class="c">// <span class="z">列表的总页数</span></span></span></div>
<div class="ln" style="top:215px"><span class="no">117</span><span class="cd"><span class="k">const</span> list = <span class="p">ref</span>([]) <span class="c">// <span class="z">列表的数据</span></span></span></div>
<div class="ln" style="top:237px"><span class="no">118</span><svg class="fa" viewBox="0 0 12 12"><path d="M3.900 1.600 8.400 6 3.900 10.400" fill="none" stroke="#6f737a" stroke-width="1" stroke-linecap="round" stroke-linejoin="round"/></svg><span class="cd"><span class="k">const</span> queryParams = <span class="p">reactive</span>(<span class="fo">{username: undefined...}</span>)</span></div>
<div class="ln" style="top:259px"><span class="no">125</span><span class="cd"><span class="k">const</span> queryFormRef = <span class="p">ref</span>() <span class="c">// <span class="z">搜索的表单</span></span></span></div>
<div class="ln" style="top:281px"><span class="no">126</span><span class="cd"><span class="k">const</span> exportLoading = <span class="p">ref</span>(<span class="k">false</span>) <span class="c">// <span class="z">导出的加载中</span></span></span></div>
<div class="ln" style="top:303px"><span class="no">127</span><span class="cd"></span></div>
<div class="ln" style="top:325px"><span class="no">128</span><span class="cd"><span class="d">/** <span class="z">查询列表</span> */</span></span></div>
<div class="ln" style="top:347px"><span class="no">129</span><svg class="fa" viewBox="0 0 12 12"><path d="M3.900 1.600 8.400 6 3.900 10.400" fill="none" stroke="#6f737a" stroke-width="1" stroke-linecap="round" stroke-linejoin="round"/></svg><span class="cd"><span class="k">const</span> <span class="f">getList</span> = <span class="k">async</span> () =&gt; <span class="fo">{...}</span></span></div>
<div class="ln" style="top:369px"><span class="no">139</span><span class="cd"></span></div>
<div class="ln" style="top:391px"><span class="no">140</span><span class="cd"><span class="d">/** <span class="z">搜索按钮操作</span> */</span></span></div>
<div class="ln" style="top:413px"><span class="no">141</span><svg class="fa" viewBox="0 0 12 12"><path d="M3.900 1.600 8.400 6 3.900 10.400" fill="none" stroke="#6f737a" stroke-width="1" stroke-linecap="round" stroke-linejoin="round"/></svg><span class="cd"><span class="k">const</span> <span class="f">handleQuery</span> = () =&gt; <span class="fo">{...}</span></span></div>
<div class="ln" style="top:435px"><span class="no">145</span><span class="cd"></span></div>
<div class="ln" style="top:457px"><span class="no">146</span><span class="cd"><span class="d">/** <span class="z">重置按钮操作</span> */</span></span></div>
<div class="ln" style="top:479px"><span class="no">147</span><svg class="fa" viewBox="0 0 12 12"><path d="M3.900 1.600 8.400 6 3.900 10.400" fill="none" stroke="#6f737a" stroke-width="1" stroke-linecap="round" stroke-linejoin="round"/></svg><span class="cd"><span class="k">const</span> <span class="f">resetQuery</span> = () =&gt; <span class="fo">{...}</span></span></div>
<div class="ln" style="top:501px"><span class="no">151</span><span class="cd"></span></div>
<div class="ln" style="top:523px"><span class="no">152</span><span class="cd"><span class="d">/** <span class="z">详情操作</span> */</span></span></div>
<div class="ln" style="top:545px"><span class="no">153</span><span class="cd"><span class="k">const</span> detailRef = <span class="p">ref</span>()</span></div>
<div class="ln" style="top:567px"><span class="no">154</span><svg class="fa" viewBox="0 0 12 12"><path d="M3.900 1.600 8.400 6 3.900 10.400" fill="none" stroke="#6f737a" stroke-width="1" stroke-linecap="round" stroke-linejoin="round"/></svg><span class="cd"><span class="k">const</span> <span class="f">openDetail</span> = (data: LoginLogApi.LoginLogVO) =&gt; <span class="fo">{...}</span></span></div>
<div class="ln" style="top:589px"><span class="no">157</span><span class="cd"></span></div>
<div class="ln" style="top:611px"><span class="no">158</span><span class="cd"><span class="d">/** <span class="z">导出按钮操作</span> */</span></span></div>
<div class="ln" style="top:633px"><span class="no">159</span><svg class="fa" viewBox="0 0 12 12"><path d="M1.600 3.900 6 8.400 10.400 3.900" fill="none" stroke="#6f737a" stroke-width="1" stroke-linecap="round" stroke-linejoin="round"/></svg><span class="cd"><span class="k">const</span> <span class="f">handleExport</span> = <span class="k">async</span> () =&gt; {</span></div>
<div class="ln" style="top:655px"><span class="no">160</span><svg class="fa" viewBox="0 0 12 12"><path d="M1.600 3.900 6 8.400 10.400 3.900" fill="none" stroke="#6f737a" stroke-width="1" stroke-linecap="round" stroke-linejoin="round"/></svg><span class="cd">  <span class="k">try</span> {</span></div>
<div class="ln" style="top:677px"><span class="no">161</span><span class="cd">    <span class="c">// <span class="z">导出的二次确认</span></span></span></div>
<div class="ln" style="top:699px"><span class="no">162</span><span class="cd">    <span class="k">await</span> message.<span class="f">exportConfirm</span>()</span></div>
<div class="ln" style="top:721px"><span class="no">163</span><span class="cd">    <span class="c">// <span class="z">发起导出</span></span></span></div>
<div class="ln" style="top:743px"><span class="no">164</span><span class="cd">    exportLoading.<span class="pn">value</span> = <span class="k">true</span></span></div>
<div class="ln" style="top:765px"><span class="no">165</span><span class="cd">    <span class="k">const</span> data = <span class="k">await</span> LoginLogApi.<span class="f">exportLoginLog</span>(queryParams)</span></div>
<div class="ln" style="top:787px"><span class="no">166</span><span class="cd">    <span class="p hl">download</span>.<span class="f">excel</span>(data<span class="k">,</span> <span class="hint">fileName:</span><span class="s">&#x27;<span class="z">登录日志</span>.xls&#x27;</span>)</span></div>
<div class="ln" style="top:809px"><span class="no">167</span><svg class="fa" viewBox="0 0 12 12"><path d="M1.600 3.900 6 8.400 10.400 3.900" fill="none" stroke="#6f737a" stroke-width="1" stroke-linecap="round" stroke-linejoin="round"/></svg><span class="cd">  } <span class="k">catch</span> {</span></div>
<div class="ln" style="top:831px"><span class="no">168</span><span class="cd">  } <span class="k">finally</span> {</span></div>
<div class="ln" style="top:853px"><span class="no">169</span><span class="cd">    exportLoading.<span class="pn">value</span> = <span class="k">false</span></span></div>
<div class="ln" style="top:875px"><span class="no">170</span><span class="cd">  }</span></div>
<div class="guide" style="top:677px;height:132px"></div>
<div class="guide" style="top:853px;height:22px"></div>
</div>
<div id="tabs">
<svg class="ti" viewBox="0 0 16 16"><path d="M9.290 1.900 7.600 4.820 5.910 1.900H.3L7.600 14.540 14.900 1.900z" fill="#41b883"/><path d="M9.290 1.900 7.600 4.820 5.910 1.900H3.220L7.600 9.490 11.980 1.900z" fill="#35495e"/></svg>
<span class="tt">index.vue</span>
<svg class="tx" viewBox="0 0 12 12"><path d="M3 3l6 6M9 3l-6 6" stroke="#868a91" stroke-width="1.100" stroke-linecap="round"/></svg>
<div class="ul"></div>
</div>
<div class="red" style="left:50.300px;top:95.800px;width:329.100px;height:28.600px"></div>
<div class="red" style="left:88.800px;top:817.800px;width:356.400px;height:30.400px"></div>
</div>
</body>
</html>
